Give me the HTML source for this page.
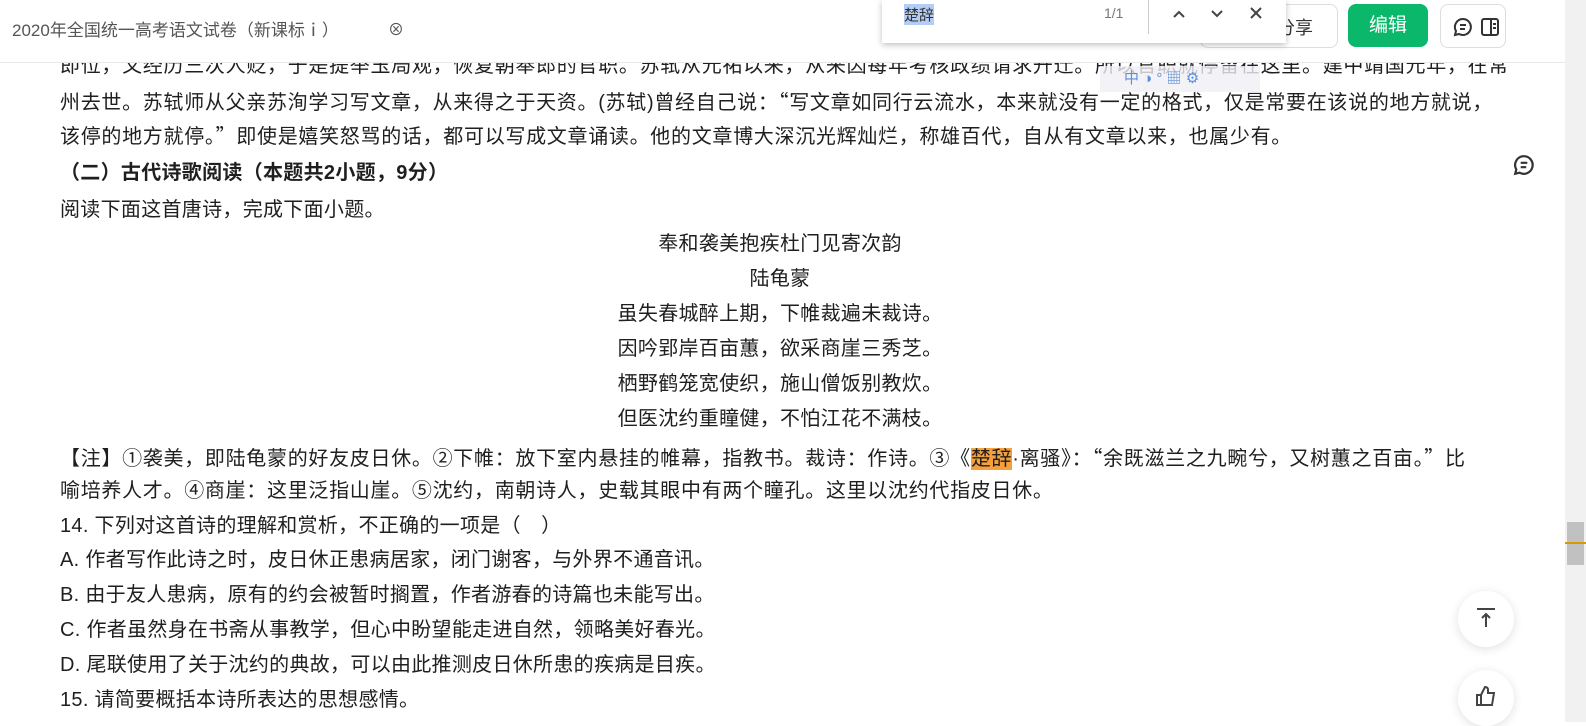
<!DOCTYPE html>
<html><head><meta charset="utf-8"><style>
body{margin:0;width:1586px;height:722px;overflow:hidden;background:#fff;font-family:"Liberation Sans","Noto Sans CJK SC",sans-serif;color:#1f1f1f;position:relative}
.l{position:absolute;left:60px;font-size:20px;line-height:34px;white-space:nowrap;letter-spacing:0.7px}
.c{position:absolute;left:0;width:1560px;text-align:center;font-size:20px;line-height:34px;letter-spacing:0.3px}
.q{font-family:"Noto Sans CJK SC",sans-serif}
.hdr{position:absolute;left:0;top:0;width:1565px;height:62px;background:#fff;border-bottom:1px solid #e8e8e8;z-index:5}
.sb{position:absolute;right:0;top:0;width:21px;height:722px;background:#f1f1f1;z-index:6}
.btn{position:absolute;background:#fff;border:1px solid #ddd;border-radius:8px}
</style></head><body>
<div class="l" style="top:49px">即位，又经历三次人贬，于是提举玉局观，恢复朝奉郎的官职。苏轼从元祐以来，从来因每年考核政绩请求升迁。所以官职就停留在这里。建中靖国元年，在常</div>
<div class="l" style="top:84px">州去世。苏轼师从父亲苏洵学习写文章，从来得之于天资。(苏轼)曾经自己说：<span class="q">“</span>写文章如同行云流水，本来就没有一定的格式，仅是常要在该说的地方就说，</div>
<div class="l" style="top:118px">该停的地方就停。<span class="q">”</span>即使是嬉笑怒骂的话，都可以写成文章诵读。他的文章博大深沉光辉灿烂，称雄百代，自从有文章以来，也属少有。</div>
<div class="l" style="top:156px;font-weight:bold;letter-spacing:0.3px">（二）古代诗歌阅读（本题共2小题，9分）</div>
<div class="l" style="top:193px;letter-spacing:0.3px">阅读下面这首唐诗，完成下面小题。</div>
<div class="c" style="top:227px">奉和袭美抱疾杜门见寄次韵</div>
<div class="c" style="top:262px">陆龟蒙</div>
<div class="c" style="top:297px">虽失春城醉上期，下帷裁遍未裁诗。</div>
<div class="c" style="top:332px">因吟郢岸百亩蕙，欲采商崖三秀芝。</div>
<div class="c" style="top:367px">栖野鹤笼宽使织，施山僧饭别教炊。</div>
<div class="c" style="top:402px">但医沈约重瞳健，不怕江花不满枝。</div>
<div class="l" style="top:440px">【注】①袭美，即陆龟蒙的好友皮日休。②下帷：放下室内悬挂的帷幕，指教书。裁诗：作诗。③《<span style="background:#f5a03c">楚辞</span>·离骚》：<span class="q">“</span>余既滋兰之九畹兮，又树蕙之百亩。<span class="q">”</span>比</div>
<div class="l" style="top:474px">喻培养人才。④商崖：这里泛指山崖。⑤沈约，南朝诗人，史载其眼中有两个瞳孔。这里以沈约代指皮日休。</div>
<div class="l" style="top:509px;letter-spacing:0.3px">14. 下列对这首诗的理解和赏析，不正确的一项是（　）</div>
<div class="l" style="top:543px;letter-spacing:0.3px">A. 作者写作此诗之时，皮日休正患病居家，闭门谢客，与外界不通音讯。</div>
<div class="l" style="top:578px;letter-spacing:0.3px">B. 由于友人患病，原有的约会被暂时搁置，作者游春的诗篇也未能写出。</div>
<div class="l" style="top:613px;letter-spacing:0.3px">C. 作者虽然身在书斋从事教学，但心中盼望能走进自然，领略美好春光。</div>
<div class="l" style="top:648px;letter-spacing:0.3px">D. 尾联使用了关于沈约的典故，可以由此推测皮日休所患的疾病是目疾。</div>
<div class="l" style="top:683px;letter-spacing:0.3px">15. 请简要概括本诗所表达的思想感情。</div>

<div class="hdr">
<div style="position:absolute;left:12px;top:16px;font-size:17px;color:#555">2020年全国统一高考语文试卷（新课标ⅰ）</div>
<div style="position:absolute;left:388px;top:16px;font-size:16px;color:#555">⊗</div>
<div class="btn" style="left:1200px;top:4px;width:136px;height:42px"><span style="position:absolute;left:76px;top:9px;font-size:18px;color:#333">分享</span></div>
<div style="position:absolute;left:1348px;top:4px;width:80px;height:43px;background:#0bb86b;border-radius:8px;color:#fff;font-size:19px;text-align:center;line-height:43px">编辑</div>
<div class="btn" style="left:1440px;top:4px;width:64px;height:42px">
<svg style="position:absolute;left:12px;top:12px" width="20" height="20" viewBox="0 0 20 20" fill="none" stroke="#333" stroke-width="2"><path d="M10 2a8 8 0 1 1-4 15l-4 1 1-4A8 8 0 0 1 10 2z"/><path d="M7 8h6M7 12h5"/></svg>
<svg style="position:absolute;left:40px;top:12px" width="18" height="20" viewBox="0 0 18 20" fill="none" stroke="#333" stroke-width="2"><rect x="1" y="2" width="16" height="16" rx="2"/><path d="M10 2v16M12 7h3M12 11h3"/></svg>
</div>
</div>
<div style="position:absolute;left:882px;top:0;width:404px;height:43px;background:#fff;box-shadow:0 2px 6px rgba(0,0,0,.25);z-index:7">
<span style="position:absolute;left:22px;top:4px;font-size:15px;background:#b3cdf5;color:#333">楚辞</span>
<span style="position:absolute;left:222px;top:5px;font-size:14px;color:#777">1/1</span>
<div style="position:absolute;left:266px;top:0;width:1px;height:34px;background:#ccc"></div>
<svg style="position:absolute;left:290px;top:8px" width="14" height="12" viewBox="0 0 14 12" fill="none" stroke="#444" stroke-width="2"><path d="M2 9l5-5 5 5"/></svg>
<svg style="position:absolute;left:328px;top:8px" width="14" height="12" viewBox="0 0 14 12" fill="none" stroke="#444" stroke-width="2"><path d="M2 3l5 5 5-5"/></svg>
<svg style="position:absolute;left:367px;top:6px" width="14" height="14" viewBox="0 0 14 14" fill="none" stroke="#444" stroke-width="2"><path d="M2 2l10 10M12 2L2 12"/></svg>
</div>
<div style="position:absolute;left:1100px;top:66px;width:160px;height:26px;background:rgba(240,240,245,.8);z-index:4;color:#5b8fd8;font-size:15px;line-height:26px;padding-left:24px;box-sizing:border-box">中 ◑ ° ▦ ⚙</div>
<svg style="position:absolute;left:1513px;top:154px" width="22" height="22" viewBox="0 0 20 20" fill="none" stroke="#333" stroke-width="2"><path d="M10 2a8 8 0 1 1-4 15l-4 1 1-4A8 8 0 0 1 10 2z"/><path d="M7 8h6M7 12h5"/></svg>
<div style="position:absolute;left:1458px;top:591px;width:56px;height:56px;border-radius:50%;background:#fff;box-shadow:0 2px 10px rgba(0,0,0,.12)">
<svg style="position:absolute;left:18px;top:16px" width="20" height="22" viewBox="0 0 20 22" fill="none" stroke="#444" stroke-width="2"><path d="M1 2h18M10 20V7M6 11l4-4 4 4"/></svg></div>
<div style="position:absolute;left:1458px;top:670px;width:56px;height:56px;border-radius:50%;background:#fff;box-shadow:0 2px 10px rgba(0,0,0,.12)">
<svg style="position:absolute;left:17px;top:15px" width="22" height="22" viewBox="0 0 22 22" fill="none" stroke="#444" stroke-width="2"><path d="M2 10h4v10H2zM6 10l4-8c2 0 3 1 3 3v3h6l-2 12H6"/></svg></div>
<div class="sb"><div style="position:absolute;left:2px;top:522px;width:17px;height:43px;background:#c1c1c1"></div><div style="position:absolute;left:0;top:542px;width:21px;height:2px;background:#d89a00"></div></div>
</body></html>
